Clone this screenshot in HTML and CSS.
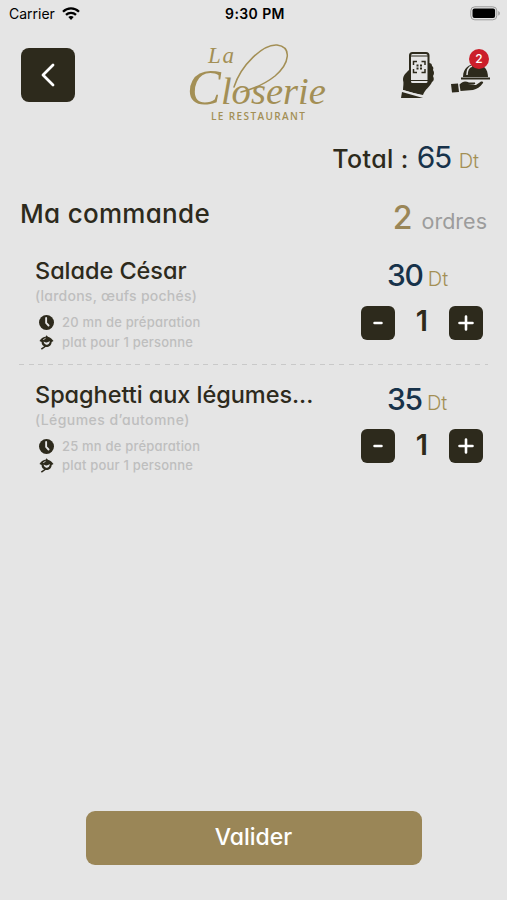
FILE: index.html
```html
<!DOCTYPE html>
<html lang="fr">
<head>
  <meta charset="UTF-8">
  <meta name="viewport" content="width=device-width, initial-scale=1">
  <title>La Closerie - Ma commande</title>
  <link rel="stylesheet" href="styles.css">
</head>
<body>
  <!-- shared icons -->
  <svg class="sprite" width="0" height="0">
    <symbol id="clock" viewBox="0 0 16 16">
      <circle cx="8" cy="8" r="8" fill="#2d2a1c"/>
      <path d="M7.600 3.200v5.200l2.600 2.800" fill="none" stroke="#e5e5e5" stroke-width="2" stroke-linecap="round"/>
    </symbol>
    <symbol id="plate" viewBox="0 0 16 16">
      <path d="M.5 6.500C2.500 3 5 2 7 1.800L8 .3L9.500 1.800C12.500 2.500 14 4.500 15.500 6.500L13.500 7.500C13.500 11 10 13.500 7 12.800L3 15.700L2 14.500L5.500 12C3.500 11 2.600 9.500 2.800 7.500Z" fill="#2d2a1c"/>
      <path d="M5 7C7 8.500 9.500 8.300 11.500 6.500C11.500 9.500 9.500 10.800 7.500 10.300C6 9.800 5 8.500 5 7Z" fill="#e5e5e5"/>
      <path d="M4.500 5L7 3.500" stroke="#e5e5e5" stroke-width=".9"/>
    </symbol>
  </svg>

  <div class="status-bar">
    <div class="carrier">
      <span>Carrier</span>
      <svg width="18" height="13" viewBox="0 0 18 13" fill="none" stroke="#000" stroke-width="2.300">
        <path d="M1 4.700C5.500.3 12.500.3 17 4.700"/>
        <path d="M4 7.900C6.800 5.200 11.200 5.200 14 7.900"/>
        <path d="M6.300 10.100C7.800 8.600 10.200 8.600 11.700 10.100L9 12.900Z" fill="#000" stroke="none"/>
      </svg>
    </div>
    <span class="time">9:30 PM</span>
    <svg class="battery" width="31" height="15" viewBox="0 0 31 15">
      <rect x=".8" y=".8" width="26" height="13" rx="4" fill="none" stroke="#999"/>
      <rect x="2.500" y="2.500" width="22.600" height="9.600" rx="2" fill="#000"/>
      <path d="M28.300 5v4.600c2-.8 2-3.800 0-4.600z" fill="#999"/>
    </svg>
  </div>

  <header class="header">
    <button class="back" aria-label="Retour">
      <svg width="14" height="24" viewBox="0 0 14 24"><path d="M12 2L2 12L12 22" fill="none" stroke="#fff" stroke-width="2.800" stroke-linecap="round" stroke-linejoin="round"/></svg>
    </button>

    <svg class="logo" width="144" height="82" viewBox="0 0 144 82">
      <!-- flourish -->
      <path d="M47 44C54 22 76 1 90 2C105 4 103 20 88 33C78 41 66 46 54 49" fill="none" stroke="#a38f55" stroke-width="1.500" stroke-linecap="round"/>
      <text class="logo-la" x="21" y="20" textLength="26">La</text>
      <text class="logo-name" x="0" y="61" textLength="139" lengthAdjust="spacingAndGlyphs"><tspan class="logo-cap">C</tspan>loserie</text>
      <text class="logo-sub" x="24" y="77" textLength="94">LE RESTAURANT</text>
    </svg>

    <div class="actions">
      <svg width="34" height="48" viewBox="0 0 34 48">
        <path d="M2 39C2 35 3 32 2 29C2 24 5 22 8 19L28 12Q31 12 31 15Q33 16 32 19Q34 22 32 25Q34 29 31 31C29 36 24 38 22 44Q11 42 2 39Z" fill="#2d2a1c"/>
        <rect x="9" y="2" width="18.500" height="31" rx="2.500" fill="#e5e5e5" stroke="#2d2a1c" stroke-width="2"/>
        <path d="M9 5h18M9 29.500h18" stroke="#2d2a1c"/>
        <path d="M12.500 14v-3.500h3.500M20.500 10.500h3.500v3.500M24 18v3.500h-3.500M16 21.500h-3.500v-3.500" fill="none" stroke="#2d2a1c" stroke-width="1.500"/>
        <path d="M15.500 14.500h2M19 14.500h2M15.500 17.500h2M19 17.500h2" stroke="#2d2a1c" stroke-width="2"/>
        <path d="M1 39.500L24 46" stroke="#e5e5e5" stroke-width="1.500"/>
        <path d="M1 41L22 47H0Z" fill="#2d2a1c"/>
      </svg>
      <div class="tray">
        <svg width="40" height="34" viewBox="0 0 40 34">
          <path d="M12 17C12 8 18 4 25 4C32 4 37 9 37 17Z" fill="#2d2a1c"/>
          <path d="M16 15C16 10 18 7 21 6" fill="none" stroke="#e5e5e5" stroke-width="1.500"/>
          <path d="M10 18.500h29" stroke="#2d2a1c" stroke-width="2"/>
          <path d="M0 24L7 23.500L8 32L1 32.500ZM8.500 24.500C12 20.500 15 21 18 22.500H24Q25 24 23 24.500L17 25L25 25L30 21.500Q33 21 32 23C29 27 26 29 22 30L9.500 31Z" fill="#2d2a1c"/>
        </svg>
        <span class="badge">2</span>
      </div>
    </div>
  </header>

  <div class="total">
    <span class="total-label">Total :</span>
    <span class="total-value">65</span>
    <span class="currency">Dt</span>
  </div>

  <div class="order-head">
    <h1>Ma commande</h1>
    <div class="count"><strong>2</strong><span>ordres</span></div>
  </div>

  <main class="orders">
    <div class="item">
      <div class="info">
        <h2>Salade César</h2>
        <p class="desc">(lardons, œufs pochés)</p>
        <p class="meta time-meta"><svg width="15" height="15"><use href="#clock"/></svg><span>20 mn de préparation</span></p>
        <p class="meta"><svg width="15" height="15"><use href="#plate"/></svg><span>plat pour 1 personne</span></p>
      </div>
      <div class="side">
        <div class="price"><span>30</span><span class="currency">Dt</span></div>
        <div class="stepper">
          <button aria-label="Moins"><svg width="20" height="20"><path d="M6.500 10h7" stroke="#fff" stroke-width="2.500" stroke-linecap="round"/></svg></button>
          <span>1</span>
          <button aria-label="Plus"><svg width="20" height="20"><path d="M3.500 10h13M10 3.500v13" stroke="#fff" stroke-width="2.600" stroke-linecap="round"/></svg></button>
        </div>
      </div>
    </div>

    <div class="item">
      <div class="info">
        <h2>Spaghetti aux légumes...</h2>
        <p class="desc autumn">(Légumes d’automne)</p>
        <p class="meta time-meta"><svg width="15" height="15"><use href="#clock"/></svg><span>25 mn de préparation</span></p>
        <p class="meta"><svg width="15" height="15"><use href="#plate"/></svg><span>plat pour 1 personne</span></p>
      </div>
      <div class="side">
        <div class="price"><span>35</span><span class="currency">Dt</span></div>
        <div class="stepper">
          <button aria-label="Moins"><svg width="20" height="20"><path d="M6.500 10h7" stroke="#fff" stroke-width="2.500" stroke-linecap="round"/></svg></button>
          <span>1</span>
          <button aria-label="Plus"><svg width="20" height="20"><path d="M3.500 10h13M10 3.500v13" stroke="#fff" stroke-width="2.600" stroke-linecap="round"/></svg></button>
        </div>
      </div>
    </div>
  </main>

  <button class="validate">Valider</button>
</body>
</html>
```

FILE: styles.css
```css
* {
  margin: 0;
  padding: 0;
  box-sizing: border-box;
}

body {
  height: 900px;
  display: flex;
  flex-direction: column;
  overflow: hidden;
  background: #e5e5e5;
  color: #2d2a1c;
  font-family: Inter, "Liberation Sans", sans-serif;
  font-feature-settings: "cv11";
  font-weight: 500;
}

button {
  border: none;
  background: #2d2a1c;
  color: #fff;
  font: inherit;
  cursor: pointer;
}

svg {
  display: block;
  flex: none;
}

.sprite {
  position: absolute;
}

.status-bar {
  height: 28px;
  padding: 0 6px 2px 9px;
  display: grid;
  grid-template-columns: 1fr auto 1fr;
  align-items: center;
  font-size: 14px;
  font-weight: 400;
  font-feature-settings: normal;
  color: #000;
}

.carrier {
  display: flex;
  align-items: center;
  gap: 7px;
}

.time {
  font-weight: 600;
  letter-spacing: 0.4px;
}

.battery {
  justify-self: end;
}

.header {
  height: 104px;
  padding: 20px 16px 0 21px;
  display: grid;
  grid-template-columns: 166px 1fr auto;
  align-items: start;
}

.back {
  width: 54px;
  height: 54px;
  border-radius: 8px;
  display: flex;
  align-items: center;
  justify-content: center;
}

.logo {
  margin-top: -5px;
  overflow: visible;
}

.logo text {
  fill: #a38f55;
}

.logo-la {
  font: italic 23px "Liberation Serif", serif;
}

.logo-name {
  font: italic 38px "Liberation Serif", serif;
}

.logo-cap {
  font-size: 50px;
}

.logo-sub {
  font: 600 10px "Open Sans", sans-serif;
}

.actions {
  display: flex;
  gap: 16px;
  padding-top: 3px;
}

.tray {
  position: relative;
  padding-top: 9px;
}

.badge {
  position: absolute;
  top: -2px;
  right: 2px;
  width: 20px;
  height: 20px;
  border-radius: 50%;
  background: #cb1f2b;
  color: #fff;
  font-size: 12px;
  line-height: 20px;
  text-align: center;
}

.total {
  height: 56px;
  padding-right: 28px;
  display: flex;
  justify-content: flex-end;
  align-items: baseline;
  line-height: 50px;
}

.total-label {
  font-size: 25px;
  letter-spacing: 0.4px;
}

.total-value {
  margin-left: 8px;
  font-size: 30px;
  font-weight: 400;
  letter-spacing: -1.5px;
  color: #17324a;
}

.currency {
  margin-left: 8px;
  font-size: 20px;
  font-weight: 300;
  color: #a38f55;
}

.order-head {
  height: 52px;
  padding: 0 20px;
  display: flex;
  justify-content: space-between;
}

h1 {
  font-size: 26px;
  font-weight: 500;
  line-height: 51px;
  letter-spacing: 0.3px;
}

.count {
  display: flex;
  align-items: baseline;
  gap: 9px;
  line-height: 60px;
}

.count strong {
  font-size: 32px;
  font-weight: 500;
  color: #9a8657;
}

.count span {
  font-size: 21.500px;
  font-weight: 400;
  color: #9c9c9c;
}

.item {
  height: 123.500px;
  margin: 0 19px;
  padding: 16px 5px 0 16px;
  display: flex;
  justify-content: space-between;
}

.item + .item {
  background: repeating-linear-gradient(90deg, #c9c9c9 0 5px, transparent 5px 9.700px) top / 100% 1px no-repeat;
}

h2 {
  font-size: 23.500px;
  font-weight: 500;
  line-height: 30px;
  letter-spacing: -0.05px;
}

.desc {
  margin-top: 1px;
  font-size: 14px;
  line-height: 18px;
  letter-spacing: 0.25px;
  color: #bebebe;
}

.desc.autumn {
  letter-spacing: 0.45px;
}

.meta {
  margin-left: 4px;
  display: flex;
  align-items: center;
  gap: 8px;
  font-size: 13px;
  line-height: 19.500px;
  letter-spacing: 0.2px;
  color: #bebebe;
}

.time-meta {
  margin-top: 8px;
}

.side {
  width: 122px;
}

.price {
  margin-top: -1px;
  padding-left: 26px;
  display: flex;
  align-items: baseline;
  font-size: 30px;
  line-height: 40px;
  letter-spacing: -1.2px;
  color: #17324a;
}

.price .currency {
  margin-left: 5px;
  letter-spacing: 0;
}

.stepper {
  margin-top: 6.500px;
  height: 34px;
  display: flex;
  justify-content: space-between;
  align-items: center;
  font-size: 29px;
  font-weight: 600;
  line-height: 34px;
}

.stepper span {
  margin-top: -3px;
}

.stepper button {
  width: 34px;
  height: 34px;
  border-radius: 6px;
  display: flex;
  align-items: center;
  justify-content: center;
}

.validate {
  width: 336px;
  height: 54px;
  margin: auto auto 35px;
  padding-bottom: 3px;
  border-radius: 9px;
  background: #9a8657;
  font-size: 23px;
}
```
